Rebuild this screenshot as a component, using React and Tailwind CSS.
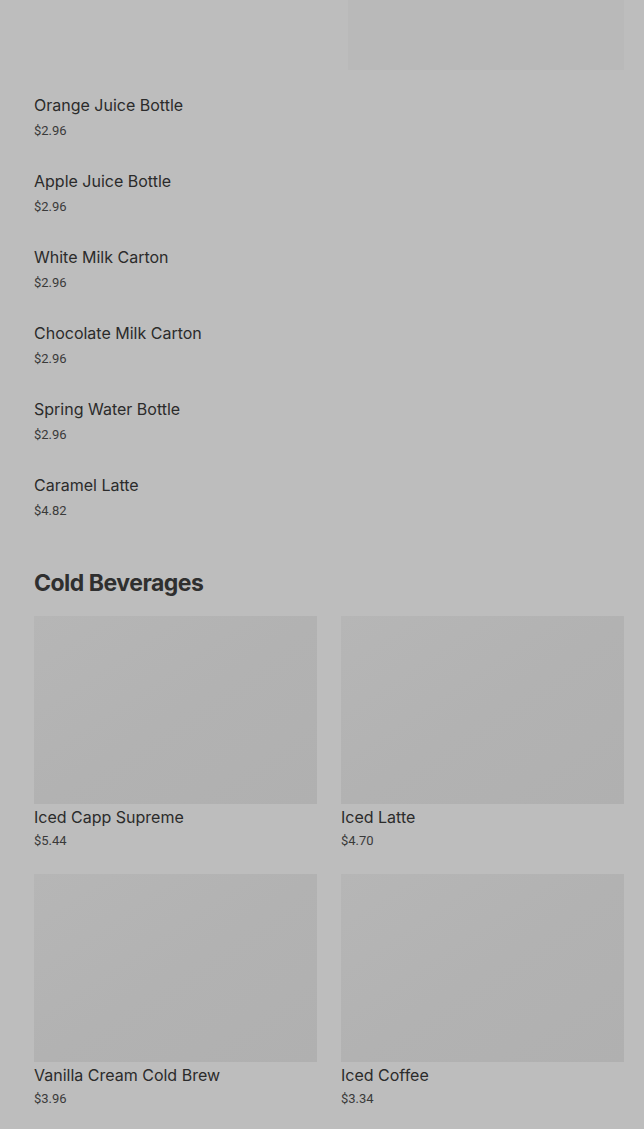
import React from 'react';

const listItems = [
  { name: 'Orange Juice Bottle', price: '$2.96' },
  { name: 'Apple Juice Bottle', price: '$2.96' },
  { name: 'White Milk Carton', price: '$2.96' },
  { name: 'Chocolate Milk Carton', price: '$2.96' },
  { name: 'Spring Water Bottle', price: '$2.96' },
  { name: 'Caramel Latte', price: '$4.82' },
];

const coldBeverages = [
  { name: 'Iced Capp Supreme', price: '$5.44' },
  { name: 'Iced Latte', price: '$4.70' },
  { name: 'Vanilla Cream Cold Brew', price: '$3.96' },
  { name: 'Iced Coffee', price: '$3.34' },
];

const priceFont = { fontFamily: 'Roboto, "Liberation Sans", sans-serif' };
const nameFont = { fontFamily: 'Inter, "Liberation Sans", sans-serif' };

const App = () => {
  return (
    <div className="min-h-[1129px] bg-[#bdbdbd] text-[#333333]" style={priceFont}>
      {/* tail of the previous card row */}
      <div className="flex justify-end pr-[20px]">
        <div className="w-[276px] h-[70px] bg-[#b9b9b9]" />
      </div>

      <div className="px-[34px] pt-[10px]">
        {listItems.map((item) => (
          <div key={item.name} className="pt-[15px] pb-[15px]">
            <div className="text-[16px] leading-[20px] font-normal text-[#2b2b2b]" style={nameFont}>{item.name}</div>
            <div className="mt-[6px] text-[13px] leading-[20px] text-[#3a3a3a]">{item.price}</div>
          </div>
        ))}

        <h2
          className="mt-[31px] text-[23px] leading-[32px] font-bold tracking-[-0.5px] text-[#2f2f2f]"
          style={nameFont}
        >
          Cold Beverages
        </h2>

        <div className="mt-[17px] grid grid-cols-2 gap-x-[24px] gap-y-[23px] mr-[-14px]">
          {coldBeverages.map((item) => (
            <div key={item.name} className="flex flex-col">
              <div className="h-[188px] bg-gradient-to-br from-[#b6b6b6] via-[#b2b2b2] to-[#b0b0b0]" />
              <div className="mt-[3px] text-[16px] leading-[20px] font-normal text-[#2b2b2b]" style={nameFont}>{item.name}</div>
              <div className="mt-[4px] text-[13px] leading-[20px] text-[#3a3a3a]">{item.price}</div>
            </div>
          ))}
        </div>
      </div>
    </div>
  );
};

export default App;
